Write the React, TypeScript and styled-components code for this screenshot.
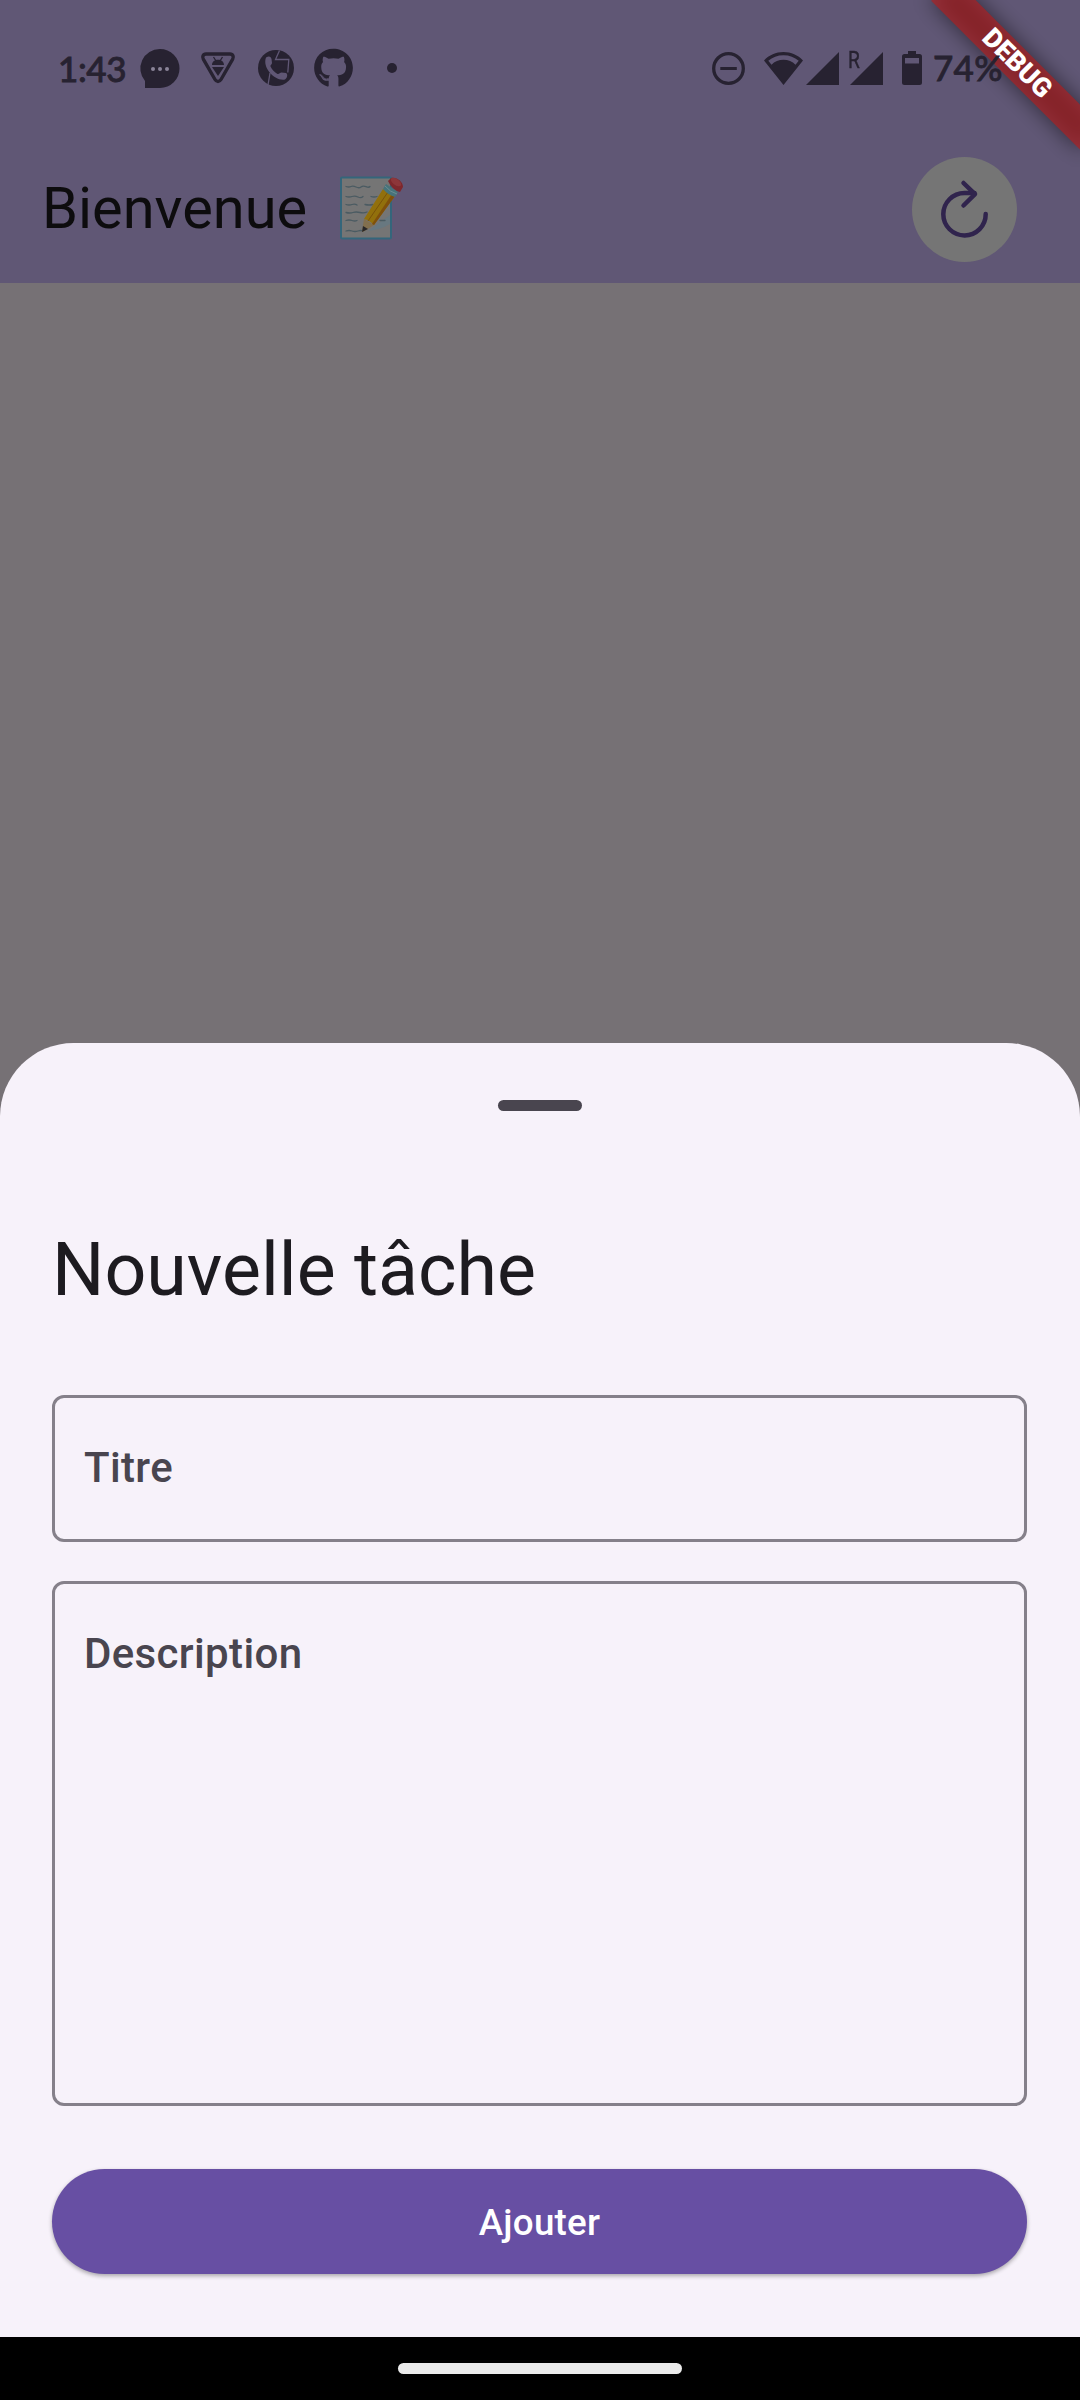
import React from "react";
import styled, { createGlobalStyle } from "styled-components";
import { FaGithub } from "react-icons/fa";

const INK = "#272231";
const BAR = "#605775";

const GlobalStyle = createGlobalStyle`
  * { box-sizing: border-box; }
  body { margin: 0; background: #767175; }
`;

const Screen = styled.main`
  position: relative;
  display: flex;
  flex-direction: column;
  width: 1080px;
  height: 2400px;
  overflow: hidden;
  background: #767175;
  font-family: Roboto, "Noto Sans", sans-serif;
`;

const Header = styled.header`
  height: 283px;
  background: ${BAR};
`;

const StatusBar = styled.div`
  position: relative;
  z-index: 2;
  display: flex;
  align-items: center;
  justify-content: space-between;
  height: 136px;
  padding: 0 76px 0 58px;
  color: ${INK};
  font: 500 35px Lato, sans-serif;
  -webkit-text-stroke: 0.8px ${INK};
`;

const StatusGroup = styled.div`
  display: flex;
  align-items: center;
`;

const Clock = styled.span`
  width: 82px;
  letter-spacing: -0.4px;
  line-height: 40px;
`;

const Percent = styled.span`
  width: 71px;
  line-height: 38px;
  padding-bottom: 2px;
  letter-spacing: 0.3px;
  white-space: nowrap;
`;

const Glyph = styled.svg<{ $gap?: number }>`
  display: block;
  flex: none;
  margin-right: ${(p) => p.$gap ?? 0}px;
  overflow: visible;
`;

const GithubMark = styled(FaGithub)`
  display: block;
  width: 39px;
  height: 40px;
  margin-right: 34px;
`;

const Dot = styled.span`
  width: 10px;
  height: 10px;
  border-radius: 50%;
  background: ${INK};
`;

const AppBar = styled.div`
  display: flex;
  align-items: center;
  justify-content: space-between;
  height: 147px;
  padding: 0 63px 0 42px;
`;

const AppTitle = styled.h1`
  display: flex;
  align-items: center;
  gap: 33px;
  margin: 0;
  padding-bottom: 3px;
  color: #0d0c0e;
  font-size: 57.75px;
  font-weight: 400;
  line-height: 74px;
`;

const RefreshButton = styled.button`
  display: grid;
  place-items: center;
  width: 105px;
  height: 105px;
  padding: 0;
  border: 0;
  border-radius: 50%;
  background: #757575;
`;

const Ribbon = styled.div`
  position: absolute;
  z-index: 1;
  top: 73.5px;
  left: 975px;
  width: 210px;
  height: 31.5px;
  transform: rotate(45deg);
  transform-origin: 105px -73.5px;
`;

const RibbonShadow = styled.div`
  position: absolute;
  inset: 0;
  background: rgba(0, 0, 0, 0.5);
  filter: blur(10.4px);
`;

const RibbonLabel = styled.div`
  position: absolute;
  inset: 0;
  background: rgba(183, 28, 28, 0.627);
  color: #fff;
  font-size: 26.8px;
  font-weight: 900;
  line-height: 31.5px;
  text-align: center;
`;

const Content = styled.div`
  flex: 1;
`;

const Sheet = styled.section`
  display: flex;
  flex-direction: column;
  height: 1294.5px;
  padding: 57.5px 53px 63px 52px;
  border-radius: 73.5px 73.5px 0 0;
  background: #f7f2fa;
`;

const DragHandle = styled.div`
  align-self: center;
  width: 84px;
  height: 11px;
  border-radius: 6px;
  background: #49454f;
`;

const SheetTitle = styled.h2`
  margin: 112px 0 77px;
  color: #1d1b20;
  font-size: 73.5px;
  font-weight: 400;
  line-height: 95px;
`;

const Field = styled.label<{ $height: number }>`
  display: block;
  height: ${(p) => p.$height}px;
  padding: 45px 29px;
  border: 3px solid #85808a;
  border-radius: 12px;
  color: #49454f;
  font-size: 42px;
  font-weight: 500;
  line-height: 50px;
  letter-spacing: 0.35px;

  & + & { margin-top: 39px; }
`;

const SubmitButton = styled.button`
  height: 105px;
  margin-top: auto;
  padding: 2px 0 0;
  border: 0;
  border-radius: 53px;
  background: #674fa3;
  box-shadow: 0 2px 4px rgba(0, 0, 0, 0.32);
  color: #fff;
  font: 500 36.75px Roboto, sans-serif;
  letter-spacing: 0.26px;
`;

const NavigationBar = styled.footer`
  display: flex;
  align-items: center;
  justify-content: center;
  height: 63px;
  background: #000;
`;

const HomePill = styled.div`
  width: 284px;
  height: 11px;
  border-radius: 6px;
  background: #ebebeb;
`;

const ChatIcon = () => (
  <Glyph $gap={22} width="39" height="39" viewBox="0 0 39 39">
    <path fill={INK} d="M20 0a19.4 19.4 0 1 1 0 39H5v-7A19.4 19.4 0 0 1 20 0Z" />
    <g fill="#8a8398">
      <circle cx="13" cy="20" r="2" />
      <circle cx="20" cy="20" r="2" />
      <circle cx="27" cy="20" r="2" />
    </g>
  </Glyph>
);

const BugShieldIcon = () => (
  <Glyph $gap={23} width="34" height="32" viewBox="0 0 34 32">
    <path fill="none" stroke={INK} strokeWidth="3.4" strokeLinejoin="round"
      d="M5 2h24c3 0 4 3 2.700 5.200L20 27.500c-1.500 2.600-4.500 2.600-6 0L2.300 7.200C1 5 2 2 5 2Z" />
    <path fill={INK} d="M11 13c0-7 12-7 12 0ZM11 15h12l-6 9Z" />
    <path stroke={INK} strokeWidth="1.300" d="m12.500 5 2.500 4M21.500 5 19 9" />
  </Glyph>
);

const PhoneGlobeIcon = () => (
  <Glyph $gap={20} width="36" height="36" viewBox="0 0 36 36">
    <circle cx="18" cy="18" r="18" fill={INK} />
    <path fill="none" stroke={BAR} strokeWidth="1.300" d="m21.500.5-4 9h13.300l-1 13M10 35l2-12" />
    <path fill={BAR} d="M8 7.500c3-2 5-1 5.500 1.500l.5 4c0 1.500-2 2-1.500 3.500 1.500 3 4 5.500 7 7.500 1.500.5 2.500-1.500 4-1.500l4.500.5c2 1 1.500 5-1 6.500C17 31.500 4 18 8 7.500Z" />
  </Glyph>
);

const DoNotDisturbIcon = () => (
  <Glyph $gap={19} width="33" height="33" viewBox="0 0 33 33">
    <circle cx="16.500" cy="16.500" r="14.800" fill="none" stroke={INK} strokeWidth="3.300" />
    <path fill={INK} d="M8.300 15h16.500v3H8.300Z" />
  </Glyph>
);

const WifiIcon = () => (
  <Glyph $gap={3} width="39" height="33" viewBox="0 0 39 33">
    <path fill={INK} fillRule="evenodd"
      d="M19.500 0C12 0 5 3 0 8.500L19.500 33 39 8.500C34 3 27 0 19.500 0Zm0 3.200c6 0 11 2 15.200 5.500l-3.200 4C28.500 9.500 24 7.800 19.500 7.800S10.500 9.500 7.500 12.700l-3.200-4C8.500 5.200 13.500 3.200 19.500 3.200Z" />
  </Glyph>
);

const SignalIcon = ({ gap }: { gap: number }) => (
  <Glyph $gap={gap} width="33" height="33" viewBox="0 0 33 33">
    <path fill={INK} d="M33 0v33H0Z" />
  </Glyph>
);

const Roaming = styled.span`
  position: relative;
  display: flex;
  margin-left: 11px;

  &::before {
    content: "R";
    position: absolute;
    left: -2px;
    top: -4px;
    font: 400 24px/24px Roboto, sans-serif;
    transform: scaleX(0.8);
    transform-origin: left;
    -webkit-text-stroke: 0.4px ${INK};
  }
`;

const BatteryIcon = () => (
  <Glyph $gap={11} width="20" height="34" viewBox="0 0 20 34">
    <path fill={INK} fillRule="evenodd"
      d="M6 0h8v3h3.500A2.500 2.500 0 0 1 20 5.500v26a2.500 2.500 0 0 1-2.500 2.500h-15A2.500 2.500 0 0 1 0 31.500v-26A2.500 2.500 0 0 1 2.500 3H6ZM3 7v5.500h14V7Z" />
  </Glyph>
);

const MemoIcon = () => (
  <Glyph width="64" height="64" viewBox="0 0 64 64" role="img" aria-label="Mémo">
    <rect x="1" y="1.500" width="50" height="61" rx="1" fill="#757575" stroke="#34667b" strokeWidth="2" />
    <path fill="#687880" d="M50 39v9c-7 4-14 6-22 7Z" />
    <path fill="none" stroke="#4b5b62" strokeWidth="1.300" strokeLinecap="round"
      d="M6 10.500q3 1 5 0t5 .5 5 0 5-.3 4-.2M6 20.500q3 1 6 0t6 .5 5-.5M31 20.500q3 1 6 0M6 28.500q3 1 6 0t5 .5M25 28.500q4 1 8 0M6 36.500q4 1 7 0t7 0 7-.5M6 44.500q3-1 6 0t5 0M6 55q3-1 6 0t6 0 5 0M40 44.500h5" />
    <path fill="#826f4e" d="m24 43-2 12 1 1 11-7Z" />
    <path fill="#92700c" d="M43 13 24 43q5 1 10 6l21-29Z" />
    <path fill="#80500b" d="m52 18-20 30 2 1 21-29Z" />
    <path fill="none" stroke="#79530a" strokeWidth="1" d="M48 16 28 45" />
    <path fill="#47737a" d="m46 8-3 5q5 6 12 8l3-5Z" />
    <path fill="none" stroke="#6d8d91" strokeWidth="1" d="M45 10q5 6 12 8" />
    <path fill="#7e282d" d="m48 5 3-3c6-1 12 4 12 9l-3 5q-8-2-12-11Z" />
    <ellipse cx="56" cy="6" rx="6" ry="3" transform="rotate(35 56 6)" fill="#8d363a" />
    <path fill="#292728" d="m23 50-1 6 6-3Z" />
  </Glyph>
);

const RefreshIcon = () => (
  <Glyph width="105" height="105" viewBox="0 0 105 105" fill="none" stroke="#30244d"
    strokeWidth="4.500" strokeLinecap="round" strokeLinejoin="round">
    <path d="M73.700 57a21.200 21.200 0 1 1-21.200-21h10" />
    <path d="M51.500 26 63 37.200 51.500 48.500" />
  </Glyph>
);

export default function App() {
  return (
    <>
      <GlobalStyle />
      <Screen>
        <Header>
          <StatusBar>
            <StatusGroup>
              <Clock>1:43</Clock>
              <ChatIcon />
              <BugShieldIcon />
              <PhoneGlobeIcon />
              <GithubMark />
              <Dot />
            </StatusGroup>
            <StatusGroup>
              <DoNotDisturbIcon />
              <WifiIcon />
              <SignalIcon gap={0} />
              <Roaming>
                <SignalIcon gap={19} />
              </Roaming>
              <BatteryIcon />
              <Percent>74%</Percent>
            </StatusGroup>
          </StatusBar>
          <AppBar>
            <AppTitle>
              Bienvenue
              <MemoIcon />
            </AppTitle>
            <RefreshButton aria-label="Actualiser">
              <RefreshIcon />
            </RefreshButton>
          </AppBar>
        </Header>
        <Ribbon>
          <RibbonShadow />
          <RibbonLabel>DEBUG</RibbonLabel>
        </Ribbon>
        <Content />
        <Sheet>
          <DragHandle />
          <SheetTitle>Nouvelle tâche</SheetTitle>
          <Field $height={147}>Titre</Field>
          <Field $height={525}>Description</Field>
          <SubmitButton>Ajouter</SubmitButton>
        </Sheet>
        <NavigationBar>
          <HomePill />
        </NavigationBar>
      </Screen>
    </>
  );
}
